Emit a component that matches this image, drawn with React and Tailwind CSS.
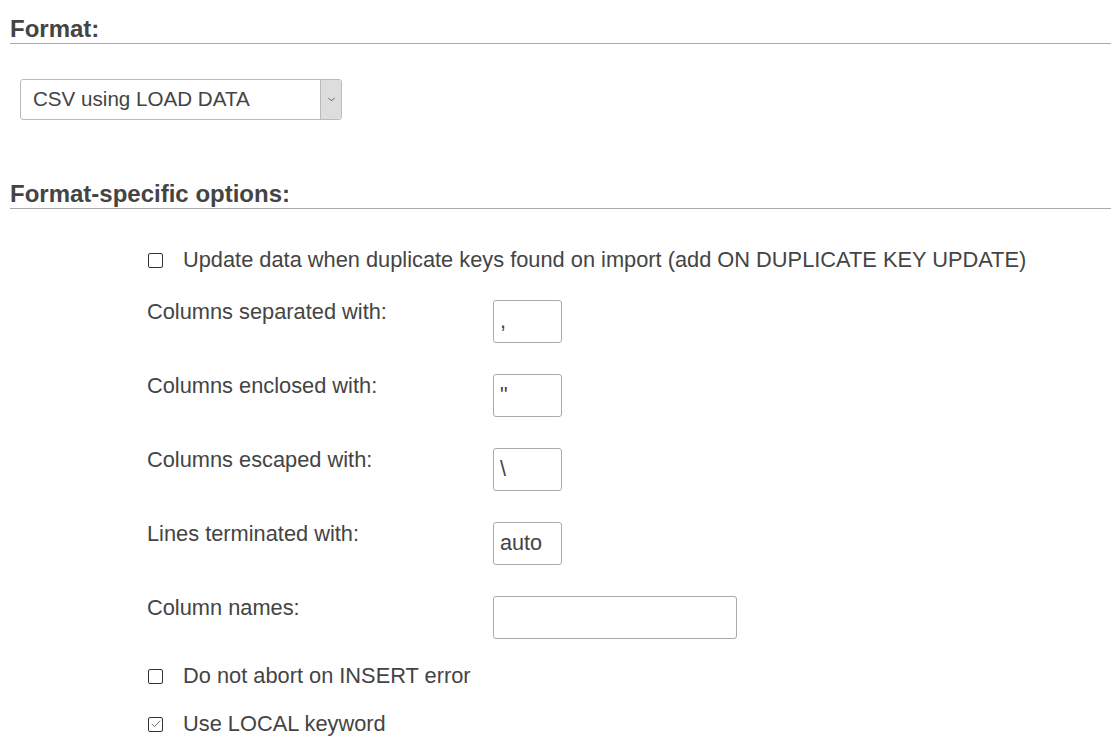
import { Check, ChevronDown } from 'lucide-react';

const ROWS = [
  { label: 'Columns separated with:', value: ',' },
  { label: 'Columns enclosed with:', value: '"' },
  { label: 'Columns escaped with:', value: '\\' },
  { label: 'Lines terminated with:', value: 'auto' },
];

function Box({ checked }) {
  return (
    <span className="w-[15px] h-[15px] border border-[#333] rounded-[2px] bg-white flex items-center justify-center shrink-0">
      {checked && <Check size={12} strokeWidth={1.6} className="text-[#555]" />}
    </span>
  );
}

function CheckRow({ checked, children, className = '' }) {
  return (
    <div className={`flex items-center h-[26px] ${className}`}>
      <span className="w-[36px] pl-[1px]">
        <Box checked={checked} />
      </span>
      <span>{children}</span>
    </div>
  );
}

function Heading({ children, className = '' }) {
  return (
    <h2 className={`ml-[10px] h-[29px] leading-[28px] text-[24px] font-bold text-[#444] border-b border-[#aaa] ${className}`}>
      {children}
    </h2>
  );
}

export default function App() {
  return (
    <div className="w-[1111px] h-[749px] overflow-hidden bg-white text-[#444] text-[21.8px] font-['Liberation_Sans',Arial,sans-serif]">
      <Heading className="mt-[15px]">Format:</Heading>

      <div className="ml-[20px] mt-[35px] w-[322px] h-[41px] border border-[#bbb] rounded-[3px] flex overflow-hidden">
        <div className="flex-1 flex items-center pl-[12px] text-[20.6px]">CSV using LOAD DATA</div>
        <div className="w-[21px] bg-[#ddd] border-l border-[#bbb] flex items-center justify-center">
          <ChevronDown size={11} strokeWidth={1.8} className="text-[#444]" />
        </div>
      </div>

      <Heading className="mt-[60px]">Format-specific options:</Heading>

      <div className="pl-[147px] mt-[38px]">
        <CheckRow>Update data when duplicate keys found on import (add ON DUPLICATE KEY UPDATE)</CheckRow>

        <div className="mt-[27px] flex flex-col gap-[31px]">
          {ROWS.map((r) => (
            <div key={r.label} className="flex">
              <div className="w-[346px] leading-[24px]">{r.label}</div>
              <div className="w-[69px] h-[43px] border border-[#aaa] rounded-[3px] flex items-center pl-[6px] text-[21.6px]">
                {r.value}
              </div>
            </div>
          ))}
          <div className="flex">
            <div className="w-[346px] leading-[24px]">Column names:</div>
            <div className="w-[244px] h-[43px] border border-[#aaa] rounded-[3px]" />
          </div>
        </div>

        <CheckRow className="mt-[24px]">Do not abort on INSERT error</CheckRow>
        <CheckRow checked className="mt-[22px]">Use LOCAL keyword</CheckRow>
      </div>
    </div>
  );
}
